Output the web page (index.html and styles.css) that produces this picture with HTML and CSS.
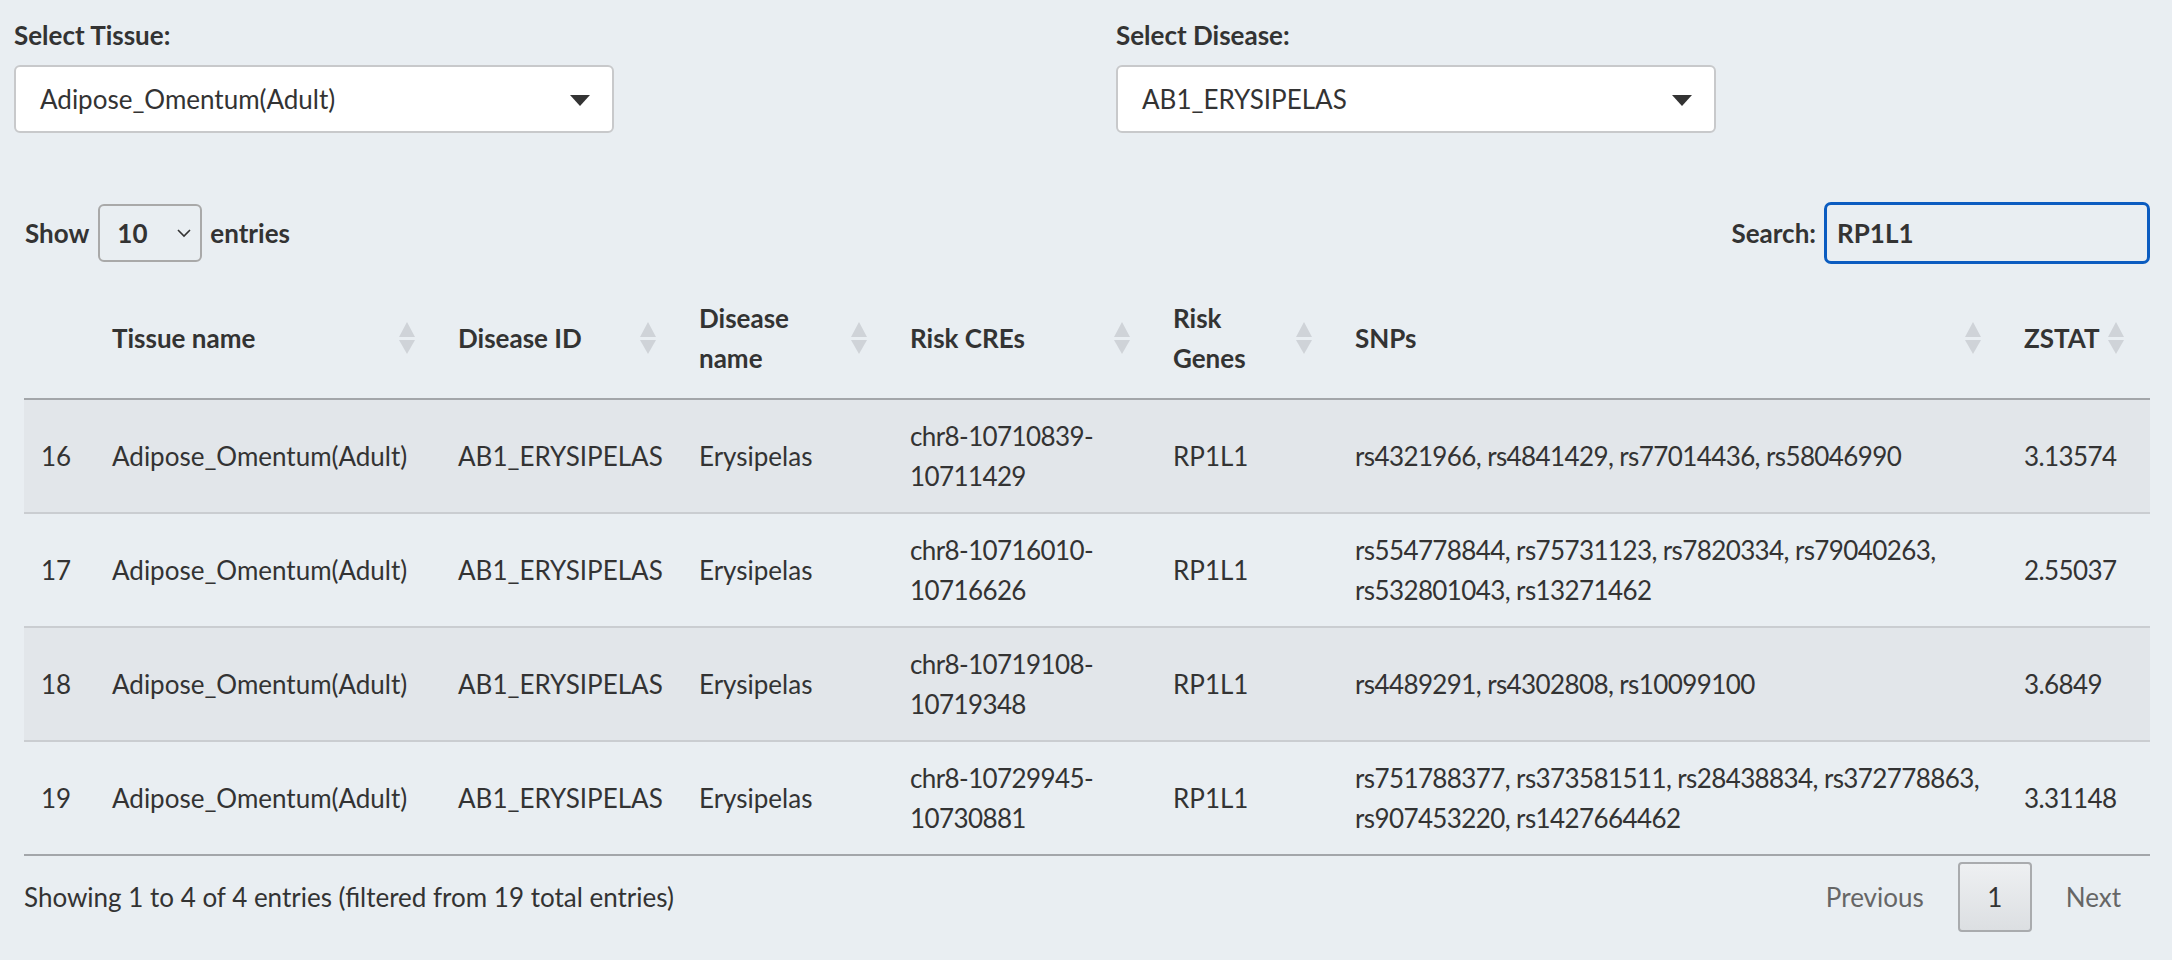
FILE: index.html
```html
<!DOCTYPE html>
<html>
<head>
<meta charset="utf-8">
<link rel="stylesheet" href="styles.css">
</head>
<body>
<div class="filters">
  <div class="filter">
    <label class="flabel">Select Tissue:</label>
    <div class="pick"><span>Adipose_Omentum(Adult)</span><span class="caret"></span></div>
  </div>
  <div class="filter">
    <label class="flabel">Select Disease:</label>
    <div class="pick"><span>AB1_ERYSIPELAS</span><span class="caret"></span></div>
  </div>
</div>

<div class="dt">
  <div class="controls">
    <div class="length">Show <span class="lensel">10<svg class="chev" width="14" height="9" viewBox="0 0 14 9"><path d="M1 1l6 6 6-6" fill="none" stroke="#333" stroke-width="1.6"/></svg></span> entries</div>
    <div class="search">Search: <span class="sbox">RP1L1</span></div>
  </div>

  <table class="grid">
    <colgroup>
      <col style="width:71px"><col style="width:346px"><col style="width:241px"><col style="width:211px"><col style="width:263px"><col style="width:182px"><col style="width:669px"><col style="width:143px">
    </colgroup>
    <thead>
      <tr>
        <th class="nosort"></th>
        <th>Tissue name<span class="sort"></span></th>
        <th>Disease ID<span class="sort"></span></th>
        <th>Disease<br>name<span class="sort"></span></th>
        <th>Risk CREs<span class="sort"></span></th>
        <th>Risk<br>Genes<span class="sort"></span></th>
        <th>SNPs<span class="sort"></span></th>
        <th>ZSTAT<span class="sort"></span></th>
      </tr>
    </thead>
    <tbody>
      <tr class="odd">
        <td>16</td><td>Adipose_Omentum(Adult)</td><td>AB1_ERYSIPELAS</td><td>Erysipelas</td><td>chr8-10710839-<br>10711429</td><td>RP1L1</td><td>rs4321966, rs4841429, rs77014436, rs58046990</td><td>3.13574</td>
      </tr>
      <tr>
        <td>17</td><td>Adipose_Omentum(Adult)</td><td>AB1_ERYSIPELAS</td><td>Erysipelas</td><td>chr8-10716010-<br>10716626</td><td>RP1L1</td><td>rs554778844, rs75731123, rs7820334, rs79040263,<br>rs532801043, rs13271462</td><td>2.55037</td>
      </tr>
      <tr class="odd">
        <td>18</td><td>Adipose_Omentum(Adult)</td><td>AB1_ERYSIPELAS</td><td>Erysipelas</td><td>chr8-10719108-<br>10719348</td><td>RP1L1</td><td>rs4489291, rs4302808, rs10099100</td><td>3.6849</td>
      </tr>
      <tr>
        <td>19</td><td>Adipose_Omentum(Adult)</td><td>AB1_ERYSIPELAS</td><td>Erysipelas</td><td>chr8-10729945-<br>10730881</td><td>RP1L1</td><td>rs751788377, rs373581511, rs28438834, rs372778863,<br>rs907453220, rs1427664462</td><td>3.31148</td>
      </tr>
    </tbody>
  </table>

  <div class="footer">
    <div class="info">Showing 1 to 4 of 4 entries (filtered from 19 total entries)</div>
    <div class="pager">
      <span class="pbtn dis">Previous</span>
      <span class="pbtn cur">1</span>
      <span class="pbtn dis">Next</span>
    </div>
  </div>
</div>
</body>
</html>
```
FILE: styles.css
```css
html, body {
  margin: 0;
  padding: 0;
}
body {
  background: #e9eef2;
  font-family: "Lato", "Liberation Sans", sans-serif;
  font-size: 26px;
  color: #333333;
  width: 2172px;
  height: 960px;
  overflow: hidden;
}
.filters {
  display: grid;
  grid-template-columns: 1102px 600px;
  padding: 18px 0 0 14px;
}
.filter {
  display: flex;
  flex-direction: column;
}
.flabel {
  font-weight: 700;
  line-height: 34px;
  margin-bottom: 13px;
}
.pick {
  box-sizing: border-box;
  width: 600px;
  height: 68px;
  background: #ffffff;
  border: 2px solid #c8c9cb;
  border-radius: 6px;
  display: flex;
  align-items: center;
  justify-content: space-between;
  padding: 0 22px 0 24px;
  color: #333;
}
.caret {
  width: 0;
  height: 0;
  border-left: 10px solid transparent;
  border-right: 10px solid transparent;
  border-top: 11px solid #333;
  margin-top: 2px;
}
.dt {
  padding: 0 22px 0 24px;
}
.controls {
  display: flex;
  justify-content: space-between;
  align-items: center;
  margin-top: 69px;
  height: 62px;
}
.length, .search {
  display: flex;
  align-items: center;
  font-weight: 700;
}
.length {
  margin-left: 1px;
}
.lensel {
  box-sizing: border-box;
  width: 104px;
  height: 58px;
  border: 2px solid #a9a9a9;
  border-radius: 6px;
  margin: 0 8px 0 9px;
  display: flex;
  align-items: center;
  justify-content: space-between;
  padding: 0 9px 0 17px;
}
.sbox {
  box-sizing: border-box;
  width: 326px;
  height: 62px;
  border: 3px solid #0b5cc0;
  border-radius: 7px;
  margin-left: 8px;
  display: flex;
  align-items: center;
  padding-left: 10px;
}
.grid {
  table-layout: fixed;
  border-collapse: collapse;
  width: 2126px;
  margin-top: 14px;
}
.grid th {
  position: relative;
  text-align: left;
  font-weight: 700;
  line-height: 40px;
  padding: 20px 48px 20px 17px;
  border-bottom: 2px solid #a3a6aa;
  vertical-align: middle;
  white-space: nowrap;
}
.grid td {
  line-height: 40px;
  padding: 16px 17px;
  vertical-align: middle;
  border-top: 2px solid #cacdd1;
  white-space: nowrap;
}
.grid td:nth-child(5),
.grid td:nth-child(7),
.grid td:nth-child(8) {
  letter-spacing: -0.6px;
}
.grid tbody tr:first-child td {
  border-top: none;
}
.grid tr.odd td {
  background: #e2e6ea;
}
.grid tbody tr:last-child td {
  border-bottom: 2px solid #a3a6aa;
}
.sort {
  position: absolute;
  right: 26px;
  top: 50%;
  margin-top: -16px;
  width: 16px;
  height: 32px;
}
.sort::before, .sort::after {
  content: "";
  position: absolute;
  left: 0;
  border-left: 8px solid transparent;
  border-right: 8px solid transparent;
}
.sort::before {
  top: 0;
  border-bottom: 15px solid #cfd3d8;
}
.sort::after {
  top: 18px;
  border-top: 14px solid #cfd3d8;
}
.footer {
  display: flex;
  justify-content: space-between;
  align-items: center;
  margin-top: 6px;
}
.info {
  line-height: 40px;
}
.pager {
  display: flex;
  align-items: center;
  margin-right: 3px;
}
.pbtn {
  line-height: 40px;
  padding: 0 26px;
  color: #666666;
}
.pbtn.cur {
  box-sizing: border-box;
  width: 74px;
  height: 70px;
  padding: 0;
  display: flex;
  align-items: center;
  justify-content: center;
  color: #333;
  border: 2px solid #a9abae;
  border-radius: 4px;
  background: linear-gradient(#eef0f2, #dcdfe2);
  margin: 0 8px 0 8px;
}
```
